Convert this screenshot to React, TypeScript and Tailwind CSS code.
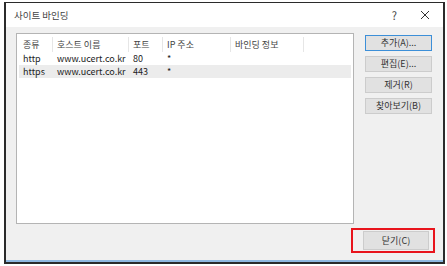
import React from "react";

const font = { fontFamily: '"Noto Sans CJK KR", "Noto Sans", sans-serif' };

function Btn({ label, focused }: { label: string; focused?: boolean }) {
  return (
    <div
      className={
        "h-[16px] w-[67px] flex items-center justify-center text-[9px] text-[#333] bg-[#e1e1e1] border " +
        (focused ? "border-[#3c8fd8]" : "border-[#cccccc]")
      }
    >
      {label}
    </div>
  );
}

export default function App() {
  const cols = [
    { w: 34, label: "종류" },
    { w: 76, label: "호스트 이름" },
    { w: 34, label: "포트" },
    { w: 68, label: "IP 주소" },
    { w: 73, label: "바인딩 정보" },
  ];
  const rows = [
    ["http", "www.ucert.co.kr", "80", "*", ""],
    ["https", "www.ucert.co.kr", "443", "*", ""],
  ];
  return (
    <div className="w-[447px] h-[266px] bg-white" style={font}>
      <div className="ml-[4px] mt-[2px] w-[441px] h-[262px] border-l-2 border-t border-r-2 border-b-2 border-[#2b2b2b] bg-[#f0f0f0] flex flex-col">
        {/* title bar */}
        <div className="h-[24px] bg-white flex items-center pl-[8px] pr-[10px] text-[9.5px] text-[#444]">
          <span>사이트 바인딩</span>
          <span className="ml-auto mr-[23px] text-[11px]">?</span>
          <svg width="10" height="10" viewBox="0 0 10 10" className="mr-[3px]">
            <path d="M1 1 L9 9 M9 1 L1 9" stroke="#333" strokeWidth="1" />
          </svg>
        </div>
        <div className="flex-1 flex flex-col">
          <div className="flex pt-[6px]">
            {/* list */}
            <div className="ml-[10px] w-[338px] h-[191px] bg-white border border-[#b4b4b4] pt-[3px] text-[9px] text-[#222]">
              <div className="flex h-[15px] items-center px-[2px]">
                {cols.map((c, i) => (
                  <div
                    key={i}
                    className="h-[15px] flex items-center pl-[4px] border-r border-[#e6e6e6] text-[#444]"
                    style={{ width: c.w }}
                  >
                    {c.label}
                  </div>
                ))}
              </div>
              {rows.map((r, ri) => (
                <div
                  key={ri}
                  className={"flex h-[13px] items-center mx-[2px] " + (ri === 1 ? "bg-[#ececec]" : "")}
                >
                  {r.map((v, i) => (
                    <div key={i} className="pl-[4px]" style={{ width: cols[i].w }}>
                      {v}
                    </div>
                  ))}
                </div>
              ))}
            </div>
            {/* buttons */}
            <div className="ml-[11px] flex flex-col gap-[5px] pt-[2px]">
              <Btn label="추가(A)..." focused />
              <Btn label="편집(E)..." />
              <Btn label="제거(R)" />
              <Btn label="찾아보기(B)" />
            </div>
          </div>
          <div className="flex justify-end pr-[8px] mt-[4px]">
            <div className="border-2 border-[#e8141c] pl-[10px] pr-[4px] py-[1px]">
              <div className="h-[19px] w-[66px] flex items-center justify-center text-[9px] text-[#333] bg-[#e1e1e1] border border-[#cccccc]">
                닫기(C)
              </div>
            </div>
          </div>
          <div className="mt-auto h-[2px] bg-[#8fb8e0]" />
        </div>
      </div>
    </div>
  );
}
